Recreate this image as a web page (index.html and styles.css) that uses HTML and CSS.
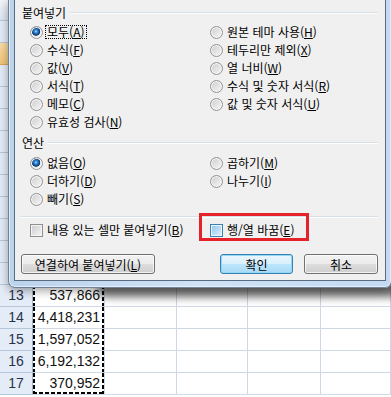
FILE: index.html
```html
<!DOCTYPE html>
<html lang="ko">
<head>
    <meta charset="UTF-8">
    <meta name="viewport" content="width=device-width, initial-scale=1.0">
    <title>선택하여 붙여넣기</title>
    <link rel="stylesheet" href="styles.css">
</head>
<body>

    <div class="sheet">
        <div class="row col-head">
            <div class="hdr"></div><div></div><div></div><div></div><div></div><div></div>
        </div>
        <div class="row"><div class="hdr"></div><div></div><div></div><div></div><div></div><div></div></div>
        <div class="row"><div class="hdr active"></div><div></div><div></div><div></div><div></div><div></div></div>
        <div class="row"><div class="hdr"></div><div class="sel"></div><div></div><div></div><div></div><div></div></div>
        <div class="row"><div class="hdr"></div><div class="sel"></div><div></div><div></div><div></div><div></div></div>
        <div class="row"><div class="hdr"></div><div class="sel"></div><div></div><div></div><div></div><div></div></div>
        <div class="row"><div class="hdr"></div><div class="sel"></div><div></div><div></div><div></div><div></div></div>
        <div class="row"><div class="hdr"></div><div class="sel"></div><div></div><div></div><div></div><div></div></div>
        <div class="row"><div class="hdr"></div><div class="sel"></div><div></div><div></div><div></div><div></div></div>
        <div class="row"><div class="hdr"></div><div class="sel"></div><div></div><div></div><div></div><div></div></div>
        <div class="row"><div class="hdr"></div><div class="sel"></div><div></div><div></div><div></div><div></div></div>
        <div class="row"><div class="hdr"></div><div class="sel"></div><div></div><div></div><div></div><div></div></div>
        <div class="row"><div class="hdr"></div><div class="sel"></div><div></div><div></div><div></div><div></div></div>
        <div class="row"><div class="hdr">13</div><div class="sel num">537,866</div><div></div><div></div><div></div><div></div></div>
        <div class="row"><div class="hdr">14</div><div class="sel num">4,418,231</div><div></div><div></div><div></div><div></div></div>
        <div class="row"><div class="hdr">15</div><div class="sel num">1,597,052</div><div></div><div></div><div></div><div></div></div>
        <div class="row"><div class="hdr">16</div><div class="sel num">6,192,132</div><div></div><div></div><div></div><div></div></div>
        <div class="row"><div class="hdr">17</div><div class="sel num last">370,952</div><div></div><div></div><div></div><div></div></div>
    </div>

    <div class="dialog">
        <div class="dialog-body">

            <div class="group-title"><span>붙여넣기</span></div>
            <div class="options paste-options">
                <div class="col">
                    <div class="opt"><span class="radio checked"></span><span class="focus">모두(<u>A</u>)</span></div>
                    <div class="opt"><span class="radio"></span>수식(<u>F</u>)</div>
                    <div class="opt"><span class="radio"></span>값(<u>V</u>)</div>
                    <div class="opt"><span class="radio"></span>서식(<u>T</u>)</div>
                    <div class="opt"><span class="radio"></span>메모(<u>C</u>)</div>
                    <div class="opt"><span class="radio"></span>유효성 검사(<u>N</u>)</div>
                </div>
                <div class="col">
                    <div class="opt"><span class="radio"></span>원본 테마 사용(<u>H</u>)</div>
                    <div class="opt"><span class="radio"></span>테두리만 제외(<u>X</u>)</div>
                    <div class="opt"><span class="radio"></span>열 너비(<u>W</u>)</div>
                    <div class="opt"><span class="radio"></span>수식 및 숫자 서식(<u>R</u>)</div>
                    <div class="opt"><span class="radio"></span>값 및 숫자 서식(<u>U</u>)</div>
                </div>
            </div>

            <div class="group-title second"><span>연산</span></div>
            <div class="options op-options">
                <div class="col">
                    <div class="opt"><span class="radio checked"></span>없음(<u>O</u>)</div>
                    <div class="opt"><span class="radio"></span>더하기(<u>D</u>)</div>
                    <div class="opt"><span class="radio"></span>빼기(<u>S</u>)</div>
                </div>
                <div class="col">
                    <div class="opt"><span class="radio"></span>곱하기(<u>M</u>)</div>
                    <div class="opt"><span class="radio"></span>나누기(<u>I</u>)</div>
                </div>
            </div>

            <div class="separator"></div>

            <div class="options check-options">
                <div class="col">
                    <div class="opt"><span class="check"></span>내용 있는 셀만 붙여넣기(<u>B</u>)</div>
                </div>
                <div class="col">
                    <div class="opt"><span class="check hover"></span>행/열 바꿈(<u>E</u>)</div>
                </div>
            </div>

            <div class="buttons">
                <button class="btn link-btn">연결하여 붙여넣기(<u>L</u>)</button>
                <button class="btn ok-btn default">확인</button>
                <button class="btn cancel-btn">취소</button>
            </div>

        </div>
    </div>

    <div class="highlight-box"></div>

</body>
</html>
```

FILE: styles.css
```css
* {
    box-sizing: border-box;
}

body {
    margin: 0;
    padding: 0;
    width: 391px;
    height: 397px;
    overflow: hidden;
    position: relative;
    background: #fff;
}

/* spreadsheet behind the dialog */

.sheet {
    font-family: 'Liberation Sans', Arial, sans-serif;
    font-size: 14px;
    color: #111;
}

.row {
    display: grid;
    grid-template-columns: 33px 72px 72px 71px 73px 1fr;
    height: 22px;
}

.row > div {
    border-right: 1px solid #d0d7e5;
    border-bottom: 1px solid #d0d7e5;
    line-height: 21px;
    white-space: nowrap;
}

.col-head {
    height: 21px;
}

.col-head > div {
    background: linear-gradient(#f3f6fb, #dde6f1);
    border-color: #9eb6ce;
}

.hdr {
    background: #e4ecf7;
    color: #27334a;
    text-align: center;
    border-right-color: #9eb6ce !important;
    border-bottom-color: #b7c7da !important;
}

.hdr.active {
    background: linear-gradient(#f9dca6, #f1c47a);
    border-bottom-color: #dba45a !important;
}

.sel {
    background:
        repeating-linear-gradient(#000 0 4px, transparent 4px 6px) left top / 2px 100% no-repeat,
        repeating-linear-gradient(#000 0 4px, transparent 4px 6px) right top / 2px 100% no-repeat,
        #fff;
}

.sel.last {
    background:
        repeating-linear-gradient(#000 0 4px, transparent 4px 6px) left top / 2px 100% no-repeat,
        repeating-linear-gradient(#000 0 4px, transparent 4px 6px) right top / 2px 100% no-repeat,
        repeating-linear-gradient(90deg, #000 0 4px, transparent 4px 6px) left bottom / 100% 2px no-repeat,
        #fff;
}

.num {
    text-align: right;
    padding-right: 4px;
}

/* paste special dialog */

.dialog {
    position: absolute;
    left: 8px;
    top: -1px;
    width: 384px;
    padding: 0 6px 6px 6px;
    background: linear-gradient(90deg, #bcd3ec, #cfe2f6 50%, #c4daf2);
    border: 1px solid rgba(40, 60, 85, 0.55);
    border-top: none;
    border-radius: 0 0 7px 7px;
    box-shadow:
        0 3px 10px rgba(0, 0, 0, 0.35),
        90px 9px 9px rgba(0, 0, 0, 0.55),
        inset 0 0 0 1px rgba(255, 255, 255, 0.55);
    font-family: 'Noto Sans CJK KR', 'Noto Sans', sans-serif;
    font-size: 12px;
    color: #000;
}

.dialog-body {
    margin-left: -1px;
    margin-right: -1px;
    background: #f0f0f0;
    border: 1px solid #5a6b7f;
    padding: 4px 7px 6px 6px;
}

.group-title {
    display: flex;
    align-items: center;
    height: 18px;
    line-height: 18px;
    padding-left: 1px;
}

.group-title::after {
    content: '';
    flex: 1;
    margin-left: 4px;
    border-top: 1px solid #d5dfe5;
    border-bottom: 1px solid #fff;
}

.group-title.second {
    margin-top: 3px;
}

.options {
    display: flex;
    padding-left: 9px;
}

.options .col:first-child {
    width: 180px;
}

.paste-options {
    margin-top: 1px;
}

.op-options {
    margin-top: 2px;
}

.opt {
    display: flex;
    align-items: center;
    height: 18px;
    line-height: 18px;
    white-space: nowrap;
}

.opt u {
    text-decoration: underline;
    text-underline-offset: 1px;
}

.radio {
    flex: none;
    width: 13px;
    height: 13px;
    margin-right: 4px;
    border-radius: 50%;
    border: 1px solid #939393;
    background: linear-gradient(135deg, #cdcdcd, #f7f7f7);
    box-shadow: inset 0 0 0 1px #f6f6f6;
}

.radio.checked {
    background:
        radial-gradient(circle at 45% 40%, #a9dcff 0, #2f86d6 1.6px, #134a8a 3.4px, #0d3566 4px, transparent 4.6px),
        linear-gradient(135deg, #cdcdcd, #f7f7f7);
}

.focus {
    outline: 1px dotted #000;
    outline-offset: -1px;
    padding: 0 2px;
    margin-left: -2px;
    line-height: 13px;
    height: 14px;
}

.separator {
    margin-top: 8px;
    border-top: 1px solid #d5dfe5;
    border-bottom: 1px solid #fff;
}

.check-options {
    margin-top: 3px;
}

.check {
    flex: none;
    width: 13px;
    height: 13px;
    margin-right: 4px;
    border: 1px solid #8e8f8f;
    background: linear-gradient(135deg, #cbcbcb, #f7f7f7);
    box-shadow: inset 0 0 0 1px #f4f4f4;
}

.check.hover {
    border-color: #3c7fb1;
    background: linear-gradient(135deg, #8fc4ee, #def0fe);
    box-shadow: inset 0 0 0 1px #eaf6fd;
}

.buttons {
    display: flex;
    margin-top: 15px;
}

.btn {
    height: 20px;
    padding: 0;
    border: 1px solid #707070;
    border-radius: 3px;
    background: linear-gradient(#f2f2f2 0, #ebebeb 50%, #dddddd 50%, #cfcfcf 100%);
    box-shadow: inset 0 0 0 1px rgba(255, 255, 255, 0.75);
    font-family: 'Noto Sans CJK KR', 'Noto Sans', sans-serif;
    font-size: 12px;
    line-height: 17px;
    color: #000;
}

.link-btn {
    width: 134px;
}

.ok-btn {
    width: 73px;
    margin-left: auto;
}

.cancel-btn {
    width: 74px;
    margin-left: 11px;
}

.btn.default {
    border-color: #3c7fb1;
    background: linear-gradient(#eaf6fd 0, #d9f0fc 50%, #bee6fd 50%, #a7d9f5 100%);
    box-shadow: inset 0 0 0 1px #8fd8f8;
}

/* annotation drawn over the screenshot */

.highlight-box {
    position: absolute;
    left: 199px;
    top: 213px;
    width: 110px;
    height: 28px;
    border: 3px solid #e5222a;
}
```
